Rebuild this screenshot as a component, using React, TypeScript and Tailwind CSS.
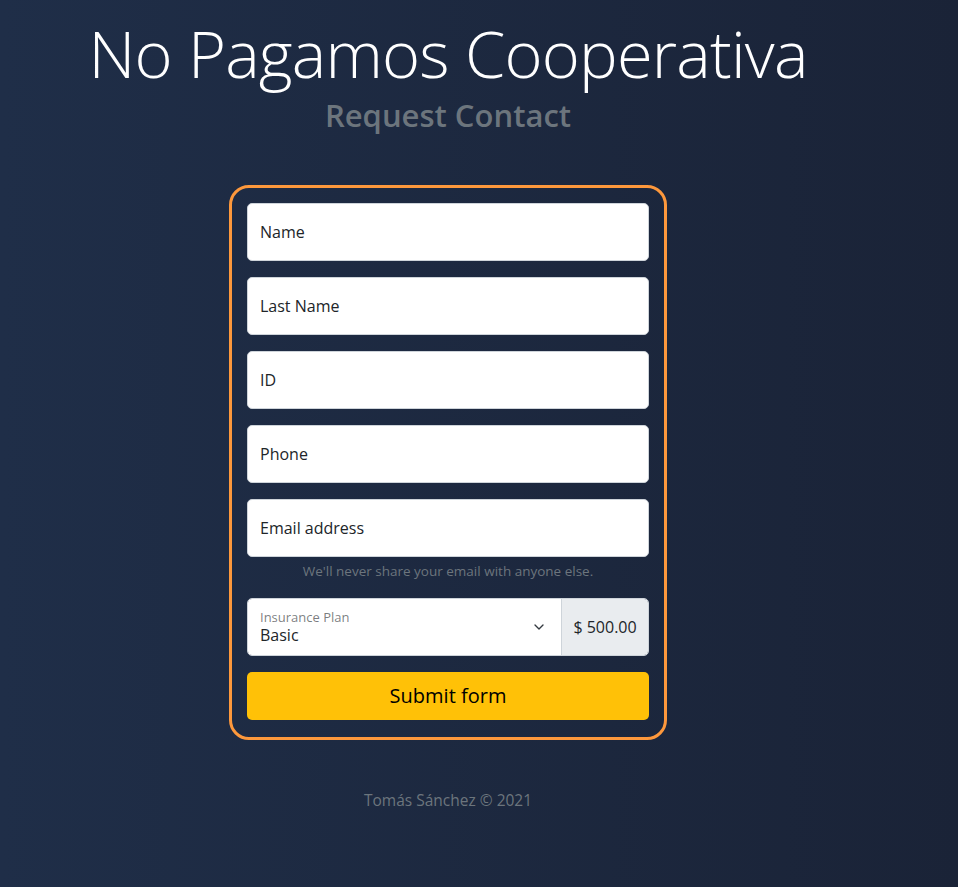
import { ChevronDown } from "lucide-react";

const fields = ["Name", "Last Name", "ID", "Phone", "Email address"];

function Field({ label }: { label: string }) {
  return (
    <div className="h-[58px] bg-white border border-[#ced4da] rounded-[5px] flex items-center px-3 text-[16px] text-[#212529]">
      {label}
    </div>
  );
}

export default function App() {
  return (
    <div className="min-h-screen bg-gradient-to-r from-[#1f2e48] to-[#1a2337] font-['Open_Sans',sans-serif]">
      <div className="w-[896px] flex flex-col items-center pt-[14px]">
        <h1 className="text-[65px] leading-[78px] font-light text-white tracking-[-0.8px]">
          No Pagamos Cooperativa
        </h1>
        <h3 className="mt-[5px] text-[31px] leading-[36px] font-semibold text-[#6c757d]">
          Request Contact
        </h3>

        <form className="mt-[52px] w-[438px] border-[3px] border-[#fd983c] rounded-[20px] px-[15px] pt-[15px] pb-[17px] flex flex-col">
          {fields.map((f, i) => (
            <div key={f} className={i < fields.length - 1 ? "mb-4" : ""}>
              <Field label={f} />
            </div>
          ))}
          <div className="text-[13.5px] text-[#6c757d] text-center mt-[4px] leading-[21px]">
            We'll never share your email with anyone else.
          </div>

          <div className="mt-[16px] h-[58px] flex rounded-[5px] border border-[#ced4da] overflow-hidden">
            <div className="flex-1 bg-white flex items-center pl-3 pr-[14px]">
              <div className="flex-1 flex flex-col justify-center">
                <span className="text-[13px] leading-[16px] text-[#212529]/60">Insurance Plan</span>
                <span className="text-[16px] leading-[20px] text-[#212529]">Basic</span>
              </div>
              <ChevronDown size={16} strokeWidth={2} className="text-[#343a40]" />
            </div>
            <div className="w-[87px] bg-[#e9ecef] border-l border-[#ced4da] flex items-center justify-center text-[16px] text-[#212529]">
              $ 500.00
            </div>
          </div>

          <button
            type="button"
            className="mt-[16px] h-[48px] rounded-[5px] bg-[#ffc107] text-[20px] text-black"
          >
            Submit form
          </button>
        </form>

        <footer className="mt-[48px] text-[15.5px] leading-[24px] text-[#6c757d]">
          Tomás Sánchez © 2021
        </footer>
      </div>
    </div>
  );
}
